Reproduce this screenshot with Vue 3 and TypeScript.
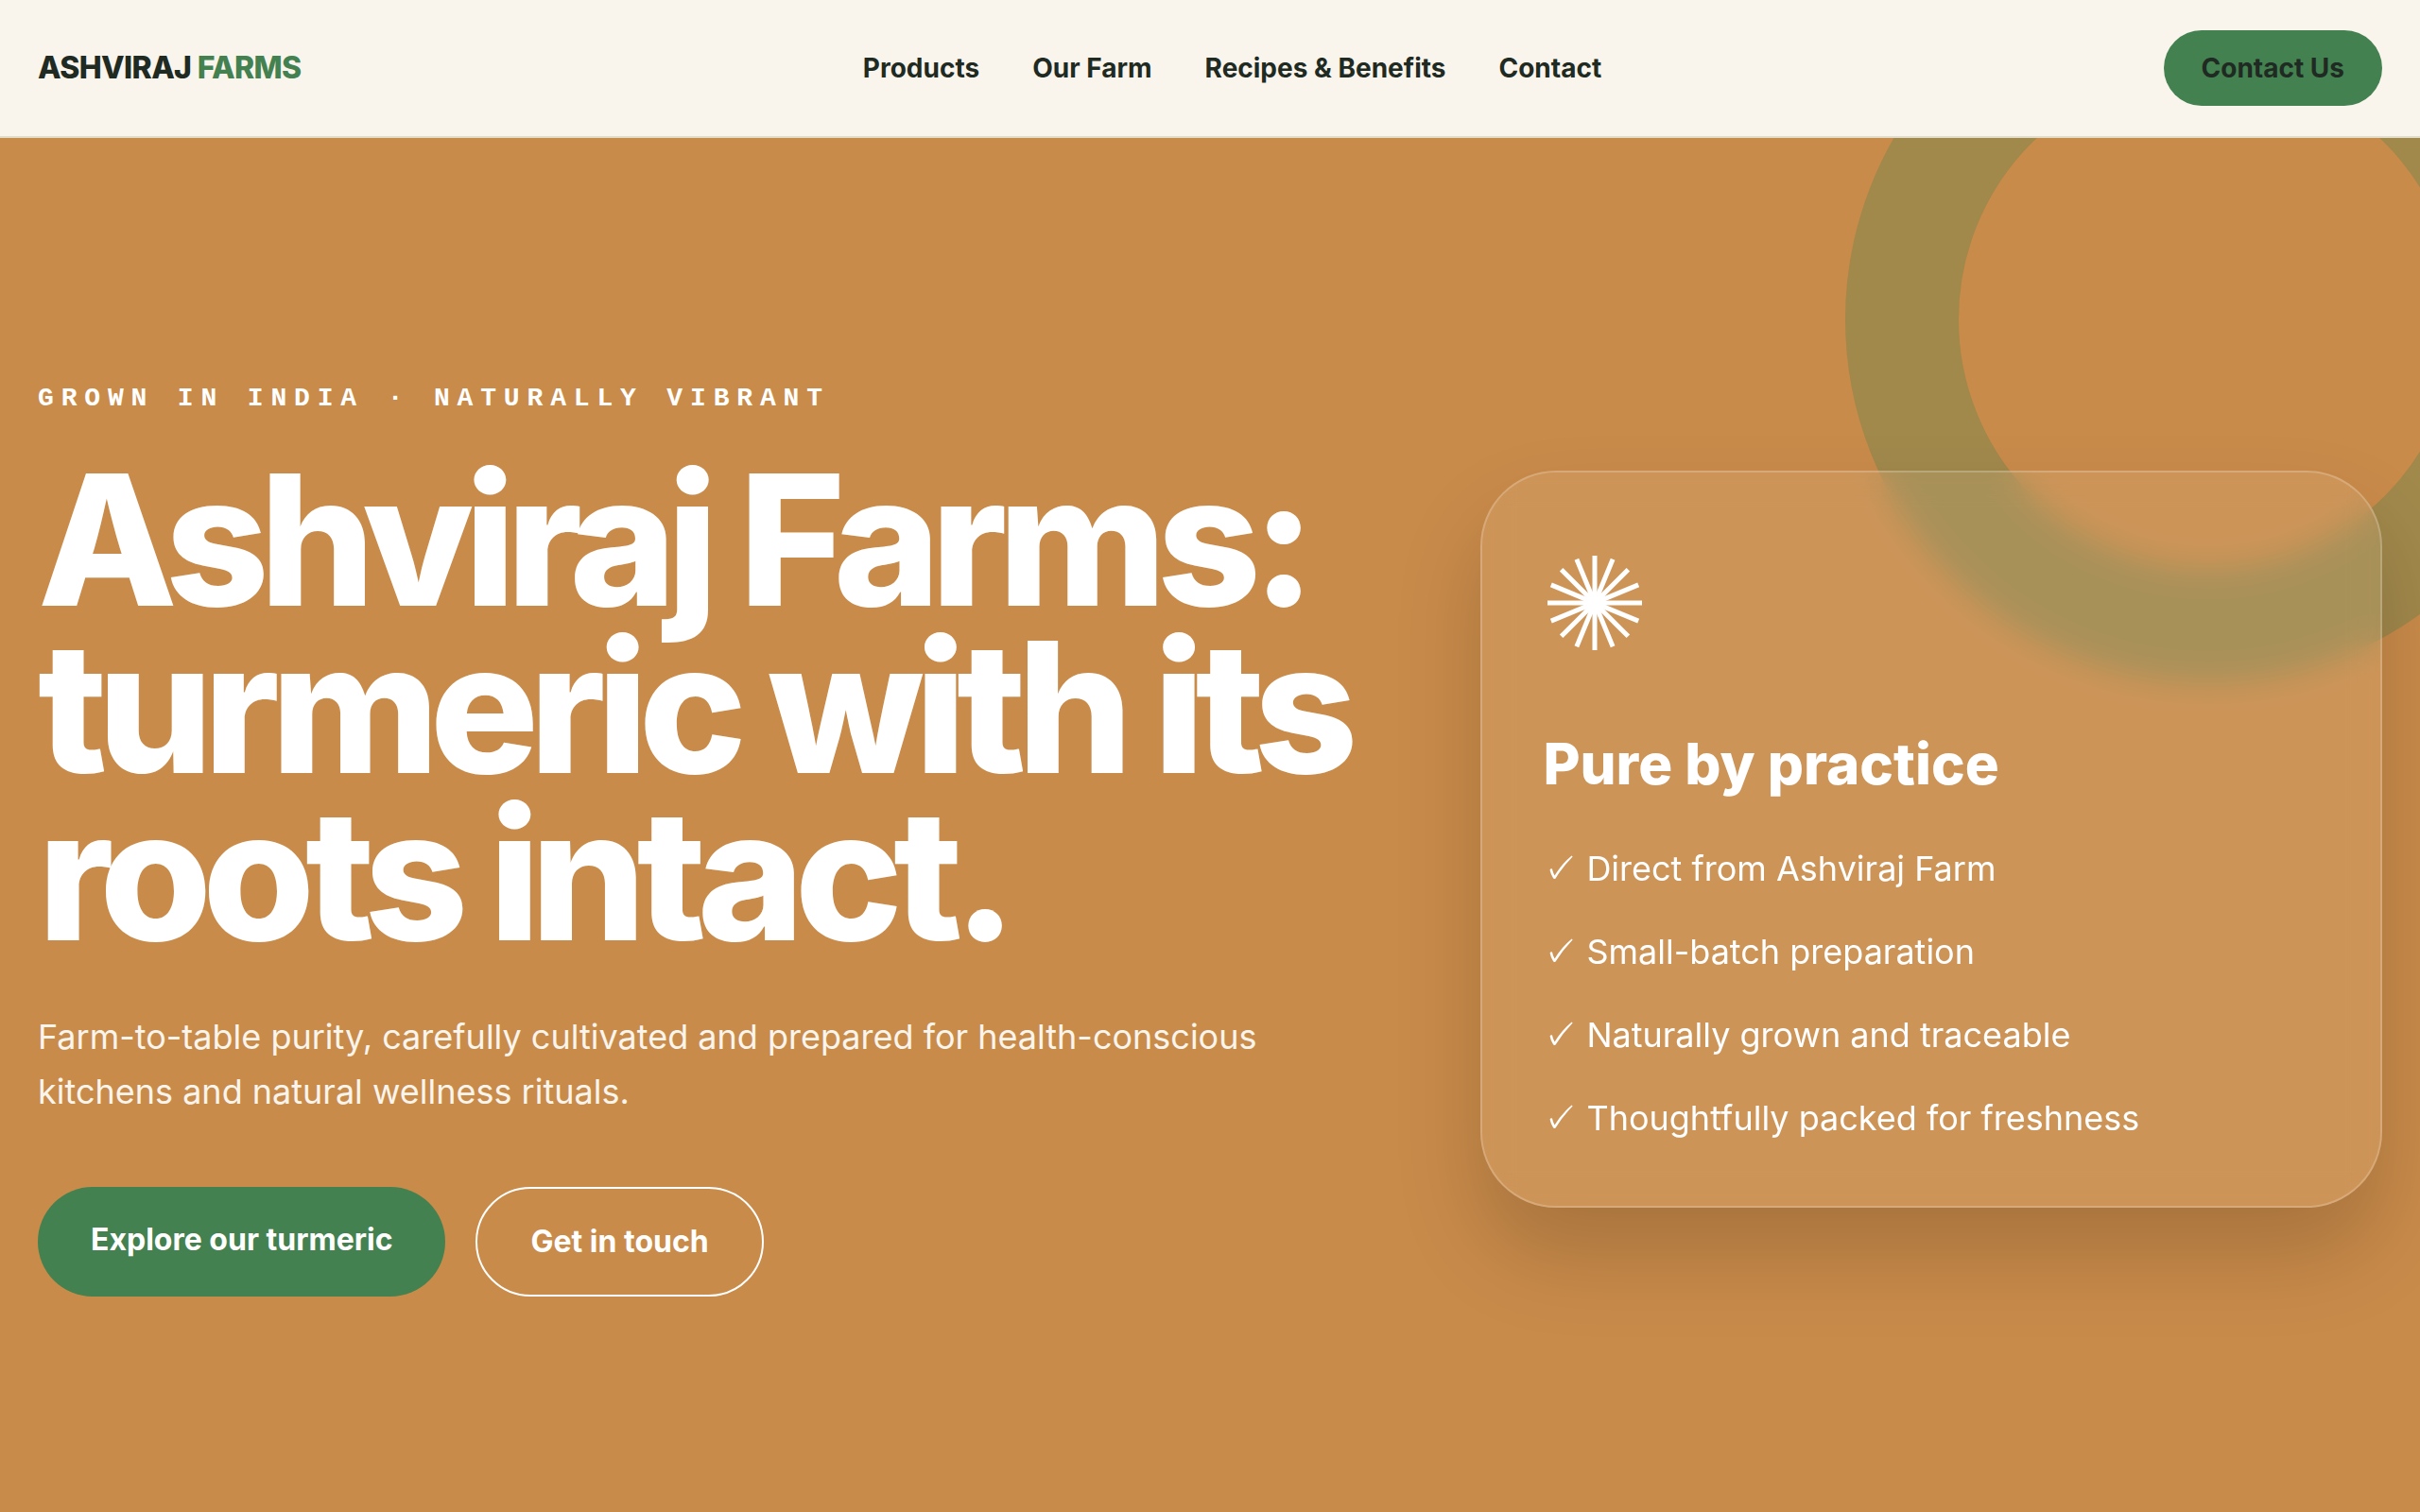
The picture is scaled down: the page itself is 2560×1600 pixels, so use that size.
<script setup lang="ts">
interface NavLink {
  label: string
  href: string
}

const navLinks: NavLink[] = [
  { label: 'Products', href: '#products' },
  { label: 'Our Farm', href: '#farm' },
  { label: 'Recipes & Benefits', href: '#recipes' },
  { label: 'Contact', href: '#contact' },
]

const promises: string[] = [
  'Direct from Ashviraj Farm',
  'Small-batch preparation',
  'Naturally grown and traceable',
  'Thoughtfully packed for freshness',
]

// Eight full-length strokes crossing at the centre give sixteen rays.
const rayAngles: number[] = Array.from({ length: 8 }, (_, i) => i * 22.5)
</script>

<template>
  <div class="page">
    <header class="site-header">
      <a class="logo" href="#top">ASHVIRAJ <span class="logo-accent">FARMS</span></a>
      <nav class="site-nav" aria-label="Main">
        <a v-for="link in navLinks" :key="link.label" :href="link.href">{{ link.label }}</a>
      </nav>
      <a class="header-cta" href="#contact">Contact Us</a>
    </header>

    <main class="hero">
      <div class="ring" aria-hidden="true"></div>
      <section class="intro">
        <p class="eyebrow">GROWN IN INDIA · NATURALLY VIBRANT</p>
        <h1>Ashviraj Farms: turmeric with its roots intact.</h1>
        <p class="lead">
          Farm-to-table purity, carefully cultivated and prepared for health-conscious kitchens and
          natural wellness rituals.
        </p>
        <div class="actions">
          <a class="btn btn-primary" href="#products">Explore our turmeric</a>
          <a class="btn btn-outline" href="#contact">Get in touch</a>
        </div>
      </section>

      <aside class="card">
        <svg class="burst" viewBox="0 0 110 148" aria-hidden="true">
          <line
            v-for="angle in rayAngles"
            :key="angle"
            x1="5"
            y1="74"
            x2="105"
            y2="74"
            :transform="`rotate(${angle} 55 74)`"
          />
        </svg>
        <h2>Pure by practice</h2>
        <ul>
          <li v-for="promise in promises" :key="promise">
            <svg class="tick" viewBox="0 0 36 58" aria-hidden="true">
              <path
                d="M7.6 30.6Q8.2 28.8 10 29.4Q10.8 33.4 12.6 36.6Q19.5 25 30.6 15.6L31.6 16.4Q21 27.4 13.6 39.4Q12.4 40.6 11.2 39.6Q8.4 35.4 7.6 30.6Z"
              />
            </svg>
            <span>{{ promise }}</span>
          </li>
        </ul>
      </aside>
    </main>
  </div>
</template>

<style>
body {
  margin: 0;
  background: #c98b4a;
}
</style>

<style scoped>
.page {
  font-family: Inter, 'Liberation Sans', sans-serif;
  color: #1f2a22;
}

a {
  color: inherit;
  text-decoration: none;
}

.site-header {
  display: flex;
  align-items: center;
  justify-content: space-between;
  padding: 32px 40px;
  background: #f9f5ec;
  border-bottom: 2px solid #e2dccb;
}

.logo {
  font-size: 32px;
  line-height: 52px;
  font-weight: 800;
  letter-spacing: -0.02em;
}

.logo-accent {
  color: #448150;
}

.site-nav {
  display: flex;
  gap: 56px;
  font-size: 28px;
  line-height: 44px;
  font-weight: 700;
}

.header-cta {
  padding: 18px 40px;
  border-radius: 40px;
  background: #448150;
  font-size: 28px;
  line-height: 44px;
  font-weight: 700;
}

.hero {
  position: relative;
  overflow: hidden;
  box-sizing: border-box;
  min-height: calc(100vh - 146px);
  display: grid;
  grid-template-columns: 3fr 2fr;
  gap: 96px;
  align-items: center;
  padding: 120px 40px 90px;
  background: #c98b4a;
  color: #fff;
}

.ring {
  position: absolute;
  top: -192px;
  right: -160px;
  box-sizing: border-box;
  width: 30vw;
  height: 30vw;
  border: 120px solid #448150;
  border-radius: 50%;
  opacity: 0.3;
}

.intro {
  position: relative;
}

.eyebrow {
  margin: 0 0 43px;
  font-family: 'Liberation Mono', monospace;
  font-size: 28px;
  line-height: 36px;
  font-weight: 700;
  letter-spacing: 0.28em;
}

h1 {
  margin: 0 0 54px;
  font-size: 192px;
  line-height: 177px;
  font-weight: 800;
  letter-spacing: -10px;
}

.lead {
  margin: 0 0 72px;
  font-size: 36px;
  line-height: 58px;
  color: #f9f5ec;
}

.actions {
  display: flex;
  gap: 32px;
}

.btn {
  padding: 30px 56px;
  border-radius: 58px;
  font-size: 32px;
  line-height: 52px;
  font-weight: 700;
}

.btn-primary {
  background: #448150;
}

.btn-outline {
  border: 2px solid #fff;
}

.card {
  position: relative;
  padding: 64px;
  border: 2px solid rgba(255, 255, 255, 0.2);
  border-radius: 80px;
  background: rgba(255, 255, 255, 0.08);
  backdrop-filter: blur(16px);
  box-shadow: 0 50px 90px rgba(0, 0, 0, 0.17);
}

.burst {
  display: block;
  width: 110px;
  height: 148px;
  stroke: #fff;
  stroke-width: 5;
}

h2 {
  margin: 60px 0 46px;
  font-size: 60px;
  line-height: 72px;
  font-weight: 800;
}

ul {
  display: grid;
  gap: 30px;
  margin: 0;
  padding: 0;
  list-style: none;
  font-size: 36px;
  line-height: 58px;
}

li {
  display: flex;
  gap: 10px;
}

.tick {
  flex: none;
  width: 36px;
  height: 58px;
  fill: #fff;
}
</style>
